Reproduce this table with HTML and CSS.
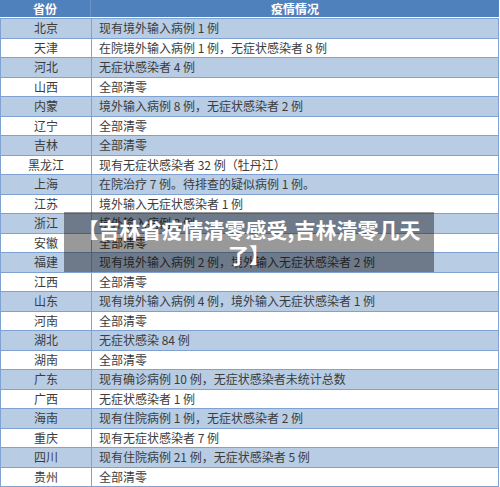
FILE: index.html
```html
<!DOCTYPE html>
<html lang="zh">
<head>
<meta charset="utf-8">
<title>各省疫情情况</title>
<link rel="stylesheet" href="styles.css">
</head>
<body>
<div class="page">
  <div class="sheet">
    <div class="row head"><div class="prov">省份</div><div class="info">疫情情况</div></div>
    <div class="row"><div class="prov">北京</div><div class="info">现有境外输入病例 1 例</div></div>
    <div class="row"><div class="prov">天津</div><div class="info">在院境外输入病例 1 例，无症状感染者 8 例</div></div>
    <div class="row"><div class="prov">河北</div><div class="info">无症状感染者 4 例</div></div>
    <div class="row"><div class="prov">山西</div><div class="info">全部清零</div></div>
    <div class="row"><div class="prov">内蒙</div><div class="info">境外输入病例 8 例，无症状感染者 2 例</div></div>
    <div class="row"><div class="prov">辽宁</div><div class="info">全部清零</div></div>
    <div class="row"><div class="prov">吉林</div><div class="info">全部清零</div></div>
    <div class="row"><div class="prov">黑龙江</div><div class="info">现有无症状感染者 32 例（牡丹江）</div></div>
    <div class="row"><div class="prov">上海</div><div class="info">在院治疗 7 例。待排查的疑似病例 1 例。</div></div>
    <div class="row"><div class="prov">江苏</div><div class="info">境外输入无症状感染者 1 例</div></div>
    <div class="row"><div class="prov">浙江</div><div class="info">境外输入病例 2 例</div></div>
    <div class="row"><div class="prov">安徽</div><div class="info">全部清零</div></div>
    <div class="row"><div class="prov">福建</div><div class="info">现有境外输入病例 2 例，境外输入无症状感染者 2 例</div></div>
    <div class="row"><div class="prov">江西</div><div class="info">全部清零</div></div>
    <div class="row"><div class="prov">山东</div><div class="info">现有境外输入病例 4 例，境外输入无症状感染者 1 例</div></div>
    <div class="row"><div class="prov">河南</div><div class="info">全部清零</div></div>
    <div class="row"><div class="prov">湖北</div><div class="info">无症状感染 84 例</div></div>
    <div class="row"><div class="prov">湖南</div><div class="info">全部清零</div></div>
    <div class="row"><div class="prov">广东</div><div class="info">现有确诊病例 10 例，无症状感染者未统计总数</div></div>
    <div class="row"><div class="prov">广西</div><div class="info">无症状感染者 1 例</div></div>
    <div class="row"><div class="prov">海南</div><div class="info">现有住院病例 1 例，无症状感染者 2 例</div></div>
    <div class="row"><div class="prov">重庆</div><div class="info">现有无症状感染者 7 例</div></div>
    <div class="row"><div class="prov">四川</div><div class="info">现有住院病例 21 例，无症状感染者 5 例</div></div>
    <div class="row"><div class="prov">贵州</div><div class="info">全部清零</div></div>
  </div>
  <div class="caption">【吉林省疫情清零感受,吉林清零几天了】</div>
</div>
</body>
</html>
```
FILE: styles.css
```css
html, body {
  margin: 0;
  padding: 0;
  background: #ffffff;
}
.page {
  position: relative;
  width: 500px;
  height: 487px;
  overflow: hidden;
  font-family: "Noto Sans CJK SC", "Noto Sans", sans-serif;
}
.sheet {
  width: 499px;
  display: flex;
  flex-direction: column;
}
.row {
  display: grid;
  grid-template-columns: 91px 1fr;
  height: 19.5px;
  box-sizing: border-box;
  border-top: 1px solid #7fa2d2;
  border-left: 1px solid #7fa2d2;
  border-right: 1px solid #7fa2d2;
  font-size: 12px;
  color: #3c3c3c;
  background: #ffffff;
}
.row:nth-child(even) {
  background: #b8cce4;
}
.row:last-child {
  height: 20.5px;
  border-bottom: 1px solid #7fa2d2;
}
.prov {
  border-right: 1px solid #7fa2d2;
  display: flex;
  align-items: center;
  justify-content: center;
  line-height: 1;
}
.info {
  display: flex;
  align-items: center;
  padding-left: 7px;
  line-height: 1;
  white-space: nowrap;
}
.row.head {
  height: 18px;
  border: none;
  border-bottom: 1px solid #ffffff;
  background: #4f81bd;
  color: #ffffff;
  font-weight: bold;
}
.row.head .prov {
  border-right: 1px solid #6d95c8;
}
.row.head .info {
  justify-content: center;
  padding-left: 0;
}
.caption {
  position: absolute;
  left: 64px;
  top: 212px;
  width: 370px;
  height: 60px;
  box-sizing: border-box;
  padding-top: 5px;
  background: rgba(0, 0, 0, 0.4);
  color: #ffffff;
  font-size: 21px;
  font-weight: bold;
  line-height: 25px;
  text-align: center;
}
```
